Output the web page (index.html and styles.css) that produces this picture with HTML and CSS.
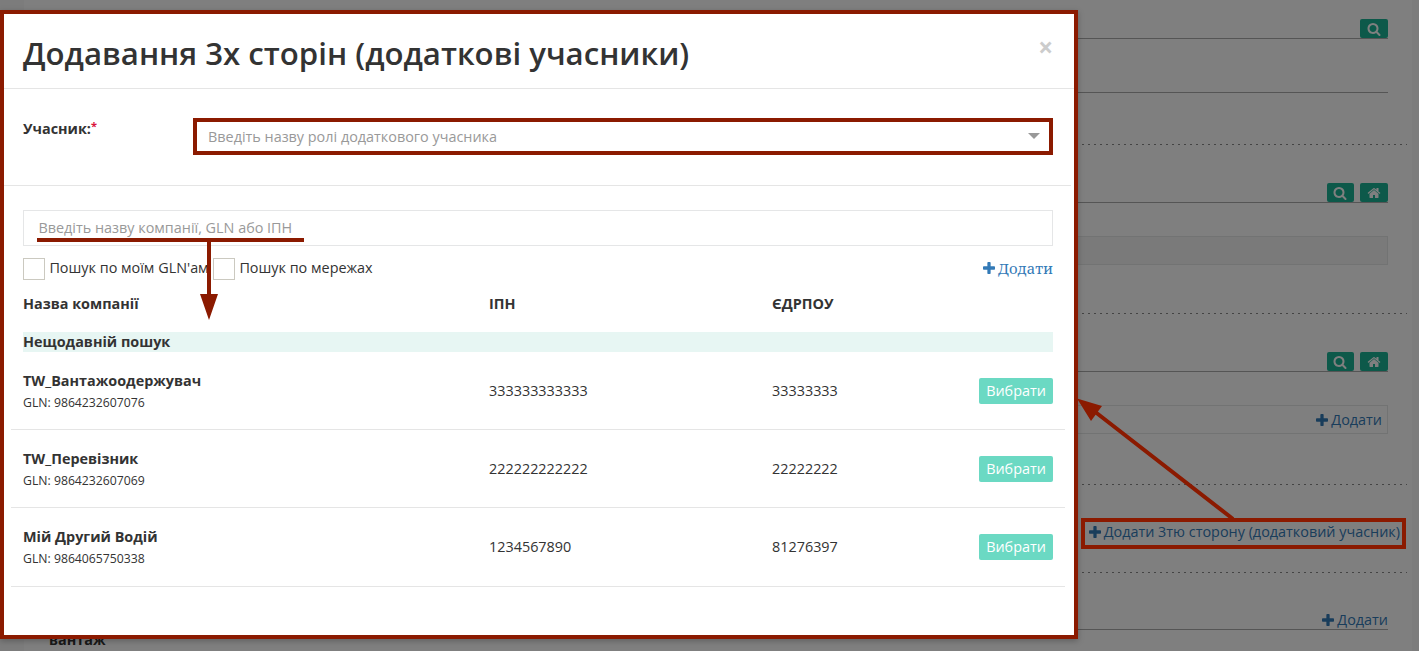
FILE: index.html
```html
<!DOCTYPE html>
<html lang="uk">
<head>
<meta charset="utf-8">
<title>Додавання 3х сторін</title>
<link rel="stylesheet" href="styles.css">
</head>
<body>
<svg class="defs" aria-hidden="true">
  <symbol id="search" viewBox="0 0 1664 1792"><path d="M1152 832q0-185-131.500-316.500t-316.500-131.500-316.500 131.500-131.500 316.500 131.500 316.500 316.500 131.500 316.500-131.500 131.500-316.500zm512 832q0 52-38 90t-90 38q-54 0-90-38l-343-342q-179 124-399 124-143 0-273.500-55.500t-225-150-150-225-55.500-273.500 55.500-273.500 150-225 225-150 273.500-55.500 273.500 55.500 225 150 150 225 55.500 273.500q0 220-124 399l343 343q37 37 37 90z"/></symbol>
  <symbol id="home" viewBox="0 0 1664 1792"><path d="M1408 992v480q0 26-19 45t-45 19h-384v-384h-256v384h-384q-26 0-45-19t-19-45v-480q0-1 .5-3t.5-3l575-474 575 474q1 2 1 6zm223-69l-62 74q-8 9-21 11h-3q-13 0-21-7l-692-577-692 577q-12 8-24 7-13-2-21-11l-62-74q-8-10-7-23.500t11-21.500l719-599q32-26 76-26t76 26l244 204v-195q0-14 9-23t23-9h192q14 0 23 9t9 23v408l219 182q10 8 11 21.500t-7 23.500z"/></symbol>
  <symbol id="plus" viewBox="0 0 1408 1408"><path d="M1408 608v192q0 40-28 68t-68 28h-416v416q0 40-28 68t-68 28h-192q-40 0-68-28t-28-68v-416h-416q-40 0-68-28t-28-68v-192q0-40 28-68t68-28h416v-416q0-40 28-68t68-28h192q40 0 68 28t28 68v416h416q40 0 68 28t28 68z"/></symbol>
</svg>

<main class="page">
  <section class="head h1"><span class="tool"><svg><use href="#search"/></svg></span></section>
  <section class="head h2"></section>
  <div class="dash d1"></div>
  <section class="head h3"><span class="tool narrow"><svg><use href="#search"/></svg></span><span class="tool"><svg><use href="#home"/></svg></span></section>
  <div class="field disabled"></div>
  <div class="dash d2"></div>
  <section class="head h3"><span class="tool narrow"><svg><use href="#search"/></svg></span><span class="tool"><svg><use href="#home"/></svg></span></section>
  <div class="field"><a class="add"><svg><use href="#plus"/></svg>Додати</a></div>
  <div class="dash d3"></div>
  <div class="third"><a class="add"><svg><use href="#plus"/></svg>Додати 3тю сторону (додатковий учасник)</a></div>
  <div class="dash d4"></div>
  <section class="head h4"><a class="add"><svg><use href="#plus"/></svg>Додати</a></section>
  <strong class="cargo">вантаж</strong>
</main>
<div class="overlay"></div>

<div class="modal">
  <header class="modal-head"><h1>Додавання 3х сторін (додаткові учасники)</h1><span class="close">×</span></header>
  <div class="role">
    <label>Учасник:<sup>*</sup></label>
    <div class="select"><span>Введіть назву ролі додаткового учасника</span><i class="caret"></i></div>
  </div>
  <div class="search">
    <div class="query">Введіть назву компанії, GLN або ІПН</div>
    <div class="options">
      <i class="box"></i><span class="opt first">Пошук по моїм GLN'ам</span>
      <i class="box"></i><span class="opt">Пошук по мережах</span>
      <a class="add serif"><svg><use href="#plus"/></svg>Додати</a>
    </div>
    <div class="cols titles"><b>Назва компанії</b><b>ІПН</b><b>ЄДРПОУ</b></div>
    <div class="recent">Нещодавній пошук</div>
    <div class="row cols"><div><b>TW_Вантажоодержувач</b><small>GLN: 9864232607076</small></div><span>333333333333</span><span>33333333</span><button>Вибрати</button></div>
    <div class="row cols"><div><b>TW_Перевізник</b><small>GLN: 9864232607069</small></div><span>222222222222</span><span>22222222</span><button>Вибрати</button></div>
    <div class="row cols"><div><b>Мій Другий Водій</b><small>GLN: 9864065750338</small></div><span>1234567890</span><span>81276397</span><button>Вибрати</button></div>
  </div>
</div>

<svg class="marks" width="1419" height="651" viewBox="0 0 1419 651">
  <path class="line" d="M37 240H304M209 240V296M1233 519L1094 411"/>
  <path class="tip" d="M200 294H218L209 320ZM1077 398.500L1102 406L1091 421Z"/>
  <rect class="line" x="1083" y="520" width="321" height="27"/>
</svg>
</body>
</html>
```
FILE: styles.css
```css
* { box-sizing: border-box; }
body { margin: 0; width: 1419px; height: 651px; overflow: hidden; position: relative; background: #f8f8f8; color: #333; font: 14.4px/20px "Open Sans", sans-serif; }
.defs { position: absolute; width: 0; height: 0; }
svg { fill: currentColor; }

.page { margin: 0 7px 0 24px; height: 651px; background: #fff; display: flex; flex-direction: column; padding-right: 24px; overflow: hidden; }
.page > * { flex: none; }
.head { border-bottom: 1px solid #aaa; display: flex; justify-content: flex-end; align-items: flex-end; gap: 6px; }
.h1 { height: 39px; }
.h2 { height: 54px; }
.h3 { height: 58px; }
.h4 { height: 57px; }
.h4 .add { height: 19px; }
.tool { width: 28px; height: 19px; border-radius: 2px; background: #1ab394; color: #fff; display: flex; align-items: center; justify-content: center; }
.tool.narrow { width: 27px; }
.tool.narrow svg { margin-right: 1px; }
.tool svg { width: 14px; height: 14px; }
.dash { height: 1px; margin-right: -19px; background: repeating-linear-gradient(90deg, transparent 0 2px, #888 2px 4px, transparent 4px 6px); }
.d1 { margin-top: 51px; }
.d2 { margin-top: 48px; }
.d3 { margin-top: 50px; }
.d4 { margin-top: 29px; }
.field { height: 29px; margin-top: 33px; border: 1px solid #e5e6e7; display: flex; justify-content: flex-end; align-items: center; padding-right: 5px; }
.disabled { background: #f5f5f5; }
.add { color: #337ab7; display: flex; align-items: center; gap: 3px; white-space: nowrap; }
.add svg { width: 12px; height: 12px; }
.third { height: 24px; margin: 34px -12px 0 0; display: flex; justify-content: flex-end; padding: 3px 0 1px; }
.cargo { padding-left: 25px; }

.overlay { position: absolute; inset: 0; background: rgba(0, 0, 0, .5); }

.modal { position: absolute; left: 0; top: 10px; width: 1078px; height: 629px; border: 4px solid #8b1a00; background: #fff; box-shadow: 0 2px 6px rgba(0, 0, 0, .25); }
.modal-head { height: 75px; border-bottom: 1px solid #e5e5e5; padding: 0 22px 0 19px; display: flex; justify-content: space-between; }
h1 { margin: 17px 0 0; font-size: 31.2px; line-height: 44px; font-weight: 600; }
.close { margin-top: 23px; font: 700 26px/20px "Open Sans", sans-serif; color: #ccc; margin-right: -1px; }
.role { height: 97px; margin-right: 3px; border-bottom: 1px solid #e5e5e5; padding: 29px 14px 0 19px; display: flex; }
label { width: 170px; font-weight: 700; padding-top: 1px; }
sup { color: #d9143c; font-size: 11px; line-height: 0; vertical-align: 4px; }
.select { width: 860px; height: 37px; border: 4px solid #8b1a00; padding: 0 9px 0 11px; display: flex; justify-content: space-between; align-items: center; color: #999; }
.caret { border: 6px solid transparent; border-top-color: #999; border-bottom: 0; margin-top: -2px; }
.search { padding: 24px 21px 0 19px; }
.query { height: 36px; border: 1px solid #e5e6e7; padding: 7px 14.4px; color: #999; }
.options { display: flex; margin-top: 12px; height: 22px; }
.box { width: 22px; height: 22px; border: 1px solid #cbc9c0; background: #fff; }
.opt { margin-left: 4.4px; }
.first { width: 163.6px; white-space: nowrap; }
.serif { margin-left: auto; height: 19px; font-family: "Noto Serif", "DejaVu Serif", serif; font-size: 14.8px; }
.cols { display: grid; grid-template-columns: 466px 283px 1fr auto; }
.titles { margin-top: 14px; height: 38px; }
.recent { height: 20px; background: #e7f6f3; font-weight: 700; }
.row { height: 78.2px; margin: 0 -12px; padding: 0 12px; border-bottom: 1px solid #e5e5e5; align-items: center; }
.row b, .row small { display: block; }
.row small { font-size: 12.24px; line-height: 23px; margin-bottom: -3px; }
button { width: 74px; height: 26px; padding: 0; border: 0; border-radius: 2px; background: #6bd9c3; color: #fff; font: inherit; }

.marks { position: absolute; left: 0; top: 0; }
.line { fill: none; stroke: #8b1a00; stroke-width: 4; }
.tip { fill: #8b1a00; }
```
